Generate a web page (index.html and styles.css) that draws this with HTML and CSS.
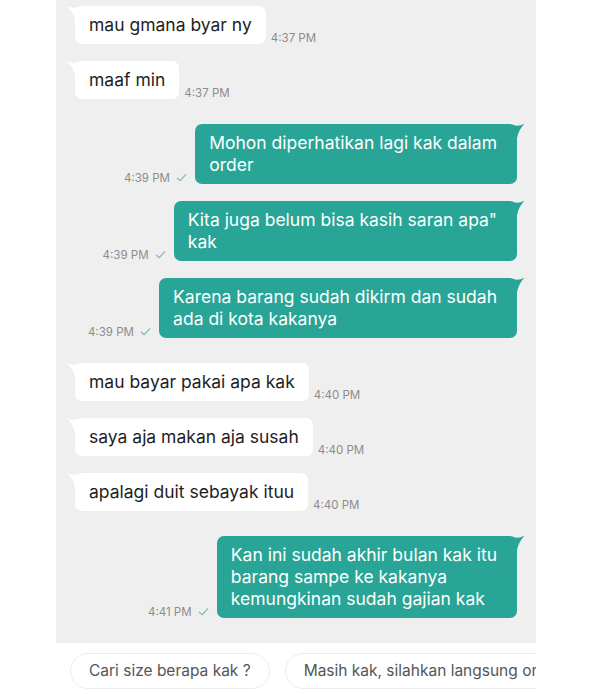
FILE: index.html
```html
<html>

<head>
    <link rel="stylesheet" href="styles.css">
</head>

<body>

    <div class="phone">
        <div class="chat">

            <div class="row in">
                <div class="bubble">mau gmana byar ny</div>
                <span class="time">4:37 PM</span>
            </div>

            <div class="row in">
                <div class="bubble">maaf min</div>
                <span class="time">4:37 PM</span>
            </div>

            <div class="row out first">
                <span class="time">4:39 PM <svg class="tick" viewBox="0 0 12 10"><polyline points="1,5.5 4.5,8.5 11,1.5" /></svg></span>
                <div class="bubble">Mohon diperhatikan lagi kak dalam<br>order</div>
            </div>

            <div class="row out">
                <span class="time">4:39 PM <svg class="tick" viewBox="0 0 12 10"><polyline points="1,5.5 4.5,8.5 11,1.5" /></svg></span>
                <div class="bubble">Kita juga belum bisa kasih saran apa"<br>kak</div>
            </div>

            <div class="row out">
                <span class="time">4:39 PM <svg class="tick" viewBox="0 0 12 10"><polyline points="1,5.5 4.5,8.5 11,1.5" /></svg></span>
                <div class="bubble">Karena barang sudah dikirm dan sudah<br>ada di kota kakanya</div>
            </div>

            <div class="row in first">
                <div class="bubble">mau bayar pakai apa kak</div>
                <span class="time">4:40 PM</span>
            </div>

            <div class="row in">
                <div class="bubble">saya aja makan aja susah</div>
                <span class="time">4:40 PM</span>
            </div>

            <div class="row in">
                <div class="bubble">apalagi duit sebayak ituu</div>
                <span class="time">4:40 PM</span>
            </div>

            <div class="row out first">
                <span class="time">4:41 PM <svg class="tick" viewBox="0 0 12 10"><polyline points="1,5.5 4.5,8.5 11,1.5" /></svg></span>
                <div class="bubble">Kan ini sudah akhir bulan kak itu<br>barang sampe ke kakanya<br>kemungkinan sudah gajian kak</div>
            </div>

        </div>

        <!-- quick replies -->
        <div class="quick">
            <div class="chip">Cari size berapa kak ?</div>
            <div class="chip">Masih kak, silahkan langsung order ya kak</div>
        </div>
    </div>

</body>

</html>
```

FILE: styles.css
```css
body {
    margin: 0;
    background-color: #ffffff;
    font-family: Inter, "Liberation Sans", sans-serif;
}

.phone {
    width: 480px;
    margin-left: 56px;
}

.chat {
    background-color: #efefef;
    height: 643px;
    padding-top: 6px;
    box-sizing: border-box;
}

.row {
    display: flex;
    align-items: flex-end;
    gap: 5px;
    margin-bottom: 17px;
}

.row.first {
    margin-top: 25px;
}

.row.in {
    padding-left: 19px;
}

.row.out {
    justify-content: flex-end;
    padding-right: 19px;
    gap: 8px;
}

.bubble {
    position: relative;
    font-size: 17.5px;
    line-height: 22px;
    border-radius: 7px;
    padding: 8px 14px;
    white-space: nowrap;
}

.in .bubble {
    background-color: #ffffff;
    color: #1e1e1e;
}

.out .bubble {
    background-color: #28a596;
    color: #ffffff;
    padding-right: 20px;
}

/* bubble tails */
.bubble::before {
    content: "";
    position: absolute;
    top: 0;
    width: 14px;
    height: 14px;
}

.out .bubble::before {
    right: -10px;
    background-color: #28a596;
    clip-path: path('M0,1 Q7,3 12,-1 Q6,5 4,14 L0,14 Z');
}

.in .bubble::before {
    left: -10px;
    background-color: #ffffff;
    clip-path: path('M14,1 Q7,3 1,0 Q8,5 10,14 L14,14 Z');
}

.time {
    font-size: 11.5px;
    line-height: 14px;
    color: #8c8c8c;
    margin-bottom: -1px;
    white-space: nowrap;
}

.tick {
    width: 11px;
    height: 9px;
    margin-left: 3px;
    fill: none;
    stroke: #86b9b1;
    stroke-width: 1.4;
}

/* quick replies */
.quick {
    display: flex;
    gap: 15px;
    padding: 10px 0 0 14px;
    overflow: hidden;
}

.chip {
    flex-shrink: 0;
    height: 34px;
    line-height: 34px;
    padding: 0 18px;
    border: 1px solid #ededed;
    border-radius: 18px;
    font-size: 15.5px;
    color: #555555;
    white-space: nowrap;
}
```
